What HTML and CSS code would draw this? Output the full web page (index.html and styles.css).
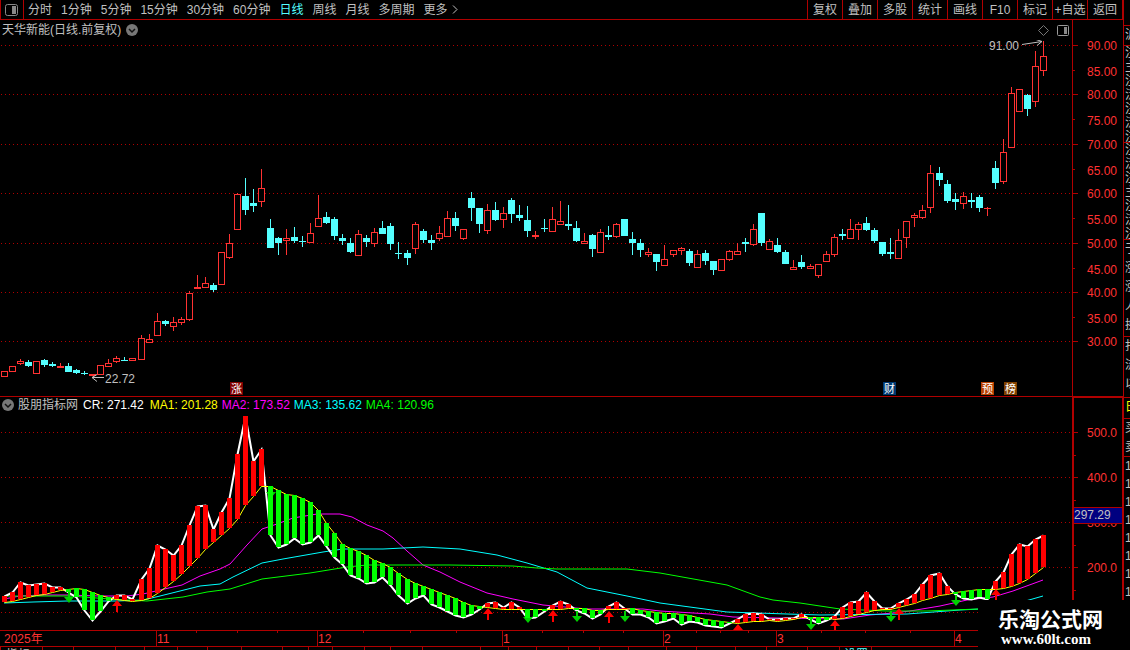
FILE: index.html
```
<!DOCTYPE html>
<html lang="zh-CN">

<head>
    <meta charset="UTF-8">
    <title>天华新能</title>
    <link rel="stylesheet" href="styles.css">
</head>

<body>
    <div class="app">
        <div class="main">
            <div class="toolbar">
                <button class="layout-btn" aria-label="布局">
                    <svg width="13" height="12" viewBox="0 0 13 12">
                        <rect x="0.5" y="0.5" width="12" height="11" rx="2" fill="none" stroke="#888" />
                        <rect x="7" y="2" width="4" height="8" fill="#888" />
                    </svg>
                </button>
                <div class="periods">
                    <button>分时</button>
                    <button>1分钟</button>
                    <button>5分钟</button>
                    <button>15分钟</button>
                    <button>30分钟</button>
                    <button>60分钟</button>
                    <button class="active">日线</button>
                    <button>周线</button>
                    <button>月线</button>
                    <button>多周期</button>
                    <button class="more">更多
                        <svg width="6" height="9" viewBox="0 0 6 9">
                            <path d="M1 0.5 L5 4.5 L1 8.5" fill="none" stroke="#c0c0c0" />
                        </svg>
                    </button>
                </div>
                <div class="tools">
                    <button>复权</button>
                    <button>叠加</button>
                    <button>多股</button>
                    <button>统计</button>
                    <button>画线</button>
                    <button>F10</button>
                    <button>标记</button>
                    <button>+自选</button>
                    <button>返回</button>
                </div>
            </div>

            <div class="panel-head">
                <div class="title">天华新能(日线.前复权)
                    <svg class="round" width="12" height="12" viewBox="0 0 12 12">
                        <circle cx="6" cy="6" r="6" fill="#777" />
                        <path d="M3 5 L6 8 L9 5" fill="none" stroke="#111" stroke-width="1.5" />
                    </svg>
                </div>
                <div class="head-icons">
                    <svg width="11" height="11" viewBox="0 0 11 11">
                        <path d="M5.5 0.5 L10.5 5.5 L5.5 10.5 L0.5 5.5 Z" fill="none" stroke="#777" />
                    </svg>
                    <svg width="12" height="11" viewBox="0 0 12 11">
                        <rect x="0.5" y="0.5" width="11" height="10" rx="1" fill="none" stroke="#999" />
                        <rect x="7" y="2" width="3" height="7" fill="#888" />
                    </svg>
                </div>
                <div class="axis-head"></div>
            </div>
            <svg id="kline" class="chart" viewBox="0 40 1123 357"></svg>

            <div class="panel-head sub">
                <div class="title">
                    <svg class="round" width="12" height="12" viewBox="0 0 12 12">
                        <circle cx="6" cy="6" r="6" fill="#777" />
                        <path d="M3 5 L6 8 L9 5" fill="none" stroke="#111" stroke-width="1.5" />
                    </svg>
                    <span class="name">股朋指标网</span>
                    <span class="cr">CR: 271.42</span>
                    <span class="ma1">MA1: 201.28</span>
                    <span class="ma2">MA2: 173.52</span>
                    <span class="ma3">MA3: 135.62</span>
                    <span class="ma4">MA4: 120.96</span>
                </div>
                <div class="axis-head"></div>
            </div>
            <svg id="cr" class="chart" viewBox="0 414 1123 233"></svg>

            <div class="bottom">
                <svg id="tabs" class="chart" viewBox="0 647 1123 3"></svg>
            </div>
        </div>

        <div class="side">
            <div class="block short"></div>
            <div class="block tiny">沪</div>
            <div class="block b1">注主注泛注泛注</div>
            <div class="block b1">注泛注主注泛注</div>
            <div class="block b2">于涨涨人换</div>
            <div class="block b3">打流以</div>
            <div class="block hl">日</div>
            <div class="block b4">买卖</div>
            <div class="block nums">1 1 1 1 1 1 1 1</div>
        </div>

        <div class="watermark">
            <b>乐淘公式网</b>
            <a href="#">www.60lt.com</a>
        </div>
    </div>
    <script src="script.js"></script>
</body>

</html>
```
FILE: styles.css
```
* {
    box-sizing: border-box;
}

body {
    margin: 0;
    background: #000;
    color: #c0c0c0;
    font: 12px/16px "Liberation Sans", "Noto Sans CJK SC", sans-serif;
}

button {
    background: none;
    border: 0;
    padding: 0;
    color: inherit;
    font: inherit;
    white-space: nowrap;
    cursor: pointer;
}

.app {
    position: relative;
    display: flex;
    height: 100vh;
    overflow: hidden;
}

.main {
    flex: 1;
    min-width: 0;
}

.toolbar {
    display: flex;
    height: 20px;
    border-bottom: 1px solid #b00000;
}

.layout-btn {
    display: flex;
    align-items: center;
    width: 24px;
    padding-left: 4px;
    border-left: 1px solid #b00000;
    border-right: 1px solid #b00000;
}

.periods {
    display: flex;
    gap: 9px;
    padding-left: 4px;
}

.periods .active {
    color: #54ffff;
}

.more {
    display: flex;
    align-items: center;
    gap: 4px;
}

.tools {
    display: grid;
    grid-template-columns: repeat(9, 35px);
    margin-left: auto;
    border-right: 1px solid #b00000;
}

.tools button {
    border-left: 1px solid #b00000;
}

.panel-head {
    display: flex;
    height: 20px;
}

.title {
    display: flex;
    align-items: center;
    flex: 1;
    gap: 5px;
    padding-left: 2px;
}

.head-icons {
    display: flex;
    align-items: center;
    gap: 8px;
    padding-right: 3px;
}

.axis-head {
    width: 51px;
    border-left: 1px solid #b00000;
}

.sub {
    height: 17px;
}

.sub .title {
    gap: 4px;
    padding-bottom: 2px;
}

.sub .axis-head {
    border-left-width: 2px;
    border-right: 1px solid #b00000;
    border-top: 1px solid #b00000;
}

.name {
    margin-right: 1px;
}

.cr {
    margin-right: 2px;
    color: #fff;
}

.ma1 {
    color: #ff0;
}

.ma2 {
    color: #f0f;
}

.ma3 {
    color: #0ff;
}

.ma4 {
    color: #0f0;
}

.chart {
    display: block;
    width: 100%;
    font-size: 12px;
}

.grid {
    stroke: #b00000;
    stroke-dasharray: 1 3;
    shape-rendering: crispEdges;
}

.frame {
    fill: #b00000;
    shape-rendering: crispEdges;
}

.label {
    fill: #ff3232;
}

.note {
    fill: #c0c0c0;
}

.arrow {
    fill: none;
    stroke: #c0c0c0;
}

.tag {
    fill: #fff;
    font-size: 11px;
}

.up {
    fill: #ff3232;
    shape-rendering: crispEdges;
}

.down {
    fill: #54ffff;
    shape-rendering: crispEdges;
}

.hollow {
    fill: #000;
    shape-rendering: crispEdges;
}

.bar-up {
    fill: #f00;
    shape-rendering: crispEdges;
}

.bar-down {
    fill: #0f0;
    shape-rendering: crispEdges;
}

.line {
    fill: none;
    stroke-width: 1;
}

.line-cr {
    stroke: #fff;
    stroke-width: 2;
}

.line-ma1 {
    stroke: #ff0;
}

.line-ma2 {
    stroke: #f0f;
}

.line-ma3 {
    stroke: #0ff;
}

.line-ma4 {
    stroke: #0f0;
}

.buy {
    fill: #f00;
}

.sell {
    fill: #00d000;
}

.side {
    width: 7px;
    overflow: hidden;
    border-left: 1px solid #b00000;
}

.block {
    width: 7px;
    overflow: hidden;
    border-bottom: 1px solid #b00000;
    padding-left: 1px;
    line-height: 19px;
    word-break: break-all;
}

.short {
    height: 26px;
}

.tiny {
    height: 20px;
}

.b1 {
    height: 97px;
    line-height: 14px;
}

.b2 {
    height: 97px;
}

.b3 {
    height: 61px;
}

.hl {
    height: 21px;
    color: #ff0;
}

.b4 {
    height: 38px;
}

.nums {
    line-height: 18px;
    border: 0;
}

.watermark {
    position: absolute;
    right: 0;
    bottom: 0;
    display: flex;
    flex-direction: column;
    width: 152px;
    height: 50px;
    padding: 6px 0 0 20px;
    background: #000;
    color: #fff;
}

.watermark b {
    font: bold 21px/25px "Noto Sans CJK SC", sans-serif;
}

.watermark a {
    padding-left: 3px;
    color: #fff;
    font: bold 15px/16px "Liberation Serif", serif;
    text-decoration: none;
}
```
FILE: script.js
```
// [high, body top, body bottom, low, up]
const candles = [
    [371, 371, 377, 377, 1], [366, 366, 372, 372, 1], [359, 361, 364, 365, 1], [360, 362, 366, 367, 0],
    [361, 361, 374, 374, 1], [359, 360, 365, 367, 0], [362, 364, 366, 367, 0], [363, 366, 368, 368, 1],
    [363, 366, 372, 372, 0], [369, 370, 373, 374, 0], [371, 373, 374, 375, 0], [374, 374, 376, 376, 1],
    [365, 365, 375, 375, 1], [359, 363, 367, 367, 1], [356, 358, 362, 363, 1], [357, 360, 361, 361, 0],
    [358, 358, 361, 361, 1], [335, 338, 360, 360, 1], [334, 339, 343, 343, 1], [313, 321, 336, 336, 1],
    [320, 321, 324, 326, 0], [317, 322, 327, 331, 1], [317, 319, 323, 325, 1], [291, 293, 320, 321, 1],
    [275, 287, 289, 289, 1], [277, 283, 288, 288, 1], [283, 285, 290, 292, 0], [252, 252, 285, 285, 1],
    [234, 243, 258, 259, 1], [193, 194, 230, 230, 1], [178, 196, 210, 215, 0], [189, 203, 206, 212, 0],
    [169, 188, 202, 207, 1], [219, 228, 248, 248, 0], [237, 238, 243, 255, 0], [229, 238, 241, 255, 1],
    [227, 237, 241, 243, 0], [236, 241, 242, 247, 0], [223, 233, 243, 243, 1], [195, 218, 227, 227, 1],
    [212, 217, 223, 224, 0], [217, 219, 236, 240, 0], [234, 238, 241, 245, 0], [238, 243, 252, 253, 0],
    [230, 234, 256, 256, 1], [235, 238, 242, 247, 0], [228, 232, 244, 247, 1], [221, 228, 234, 234, 0],
    [223, 226, 244, 250, 0], [242, 253, 254, 259, 0], [250, 253, 258, 265, 0], [222, 224, 249, 254, 1],
    [229, 231, 240, 243, 0], [235, 240, 243, 250, 0], [226, 233, 239, 241, 1], [211, 218, 237, 237, 1],
    [212, 218, 226, 231, 0], [229, 229, 239, 240, 1], [192, 198, 208, 221, 0], [208, 208, 224, 233, 0],
    [204, 210, 231, 234, 1], [202, 210, 220, 221, 0], [207, 213, 220, 228, 1], [198, 200, 214, 223, 0],
    [205, 215, 218, 221, 0], [206, 220, 231, 237, 0], [231, 235, 237, 239, 1], [219, 228, 229, 232, 0],
    [207, 219, 232, 232, 1], [201, 221, 225, 225, 1], [205, 224, 226, 230, 0], [221, 228, 241, 242, 0],
    [233, 241, 244, 244, 1], [234, 235, 249, 257, 0], [229, 232, 253, 253, 1], [226, 235, 237, 240, 0],
    [223, 224, 237, 238, 1], [219, 219, 236, 236, 0], [232, 239, 243, 255, 0], [239, 243, 250, 257, 0],
    [248, 252, 255, 257, 1], [254, 254, 262, 271, 0], [245, 259, 266, 266, 1], [250, 250, 255, 257, 1],
    [247, 248, 251, 255, 1], [249, 251, 263, 266, 0], [250, 254, 268, 268, 1], [250, 253, 261, 265, 0],
    [261, 261, 270, 275, 0], [259, 259, 271, 271, 1], [250, 251, 260, 261, 1], [243, 251, 255, 255, 1],
    [238, 242, 244, 252, 0], [224, 229, 245, 246, 1], [213, 213, 243, 246, 0], [239, 241, 250, 250, 1],
    [238, 245, 252, 253, 0], [250, 252, 264, 264, 0], [260, 267, 270, 270, 1], [255, 262, 267, 269, 0],
    [264, 266, 269, 269, 1], [264, 264, 276, 278, 1], [251, 254, 262, 262, 1], [234, 237, 255, 257, 1],
    [229, 234, 236, 240, 0], [219, 229, 239, 239, 1], [222, 224, 230, 240, 1], [217, 223, 230, 231, 0],
    [228, 230, 241, 243, 0], [242, 242, 254, 256, 0], [238, 252, 254, 259, 0], [229, 240, 259, 259, 1],
    [221, 221, 238, 248, 1], [213, 215, 218, 227, 1], [205, 210, 218, 219, 1], [165, 173, 208, 213, 1],
    [167, 173, 180, 186, 0], [180, 184, 201, 203, 0], [193, 199, 202, 210, 0], [192, 196, 204, 209, 1],
    [193, 200, 202, 208, 0], [195, 197, 208, 212, 0], [207, 208, 209, 216, 1], [161, 168, 183, 189, 0],
    [139, 152, 182, 184, 1], [87, 93, 148, 148, 1], [89, 89, 112, 112, 1], [94, 95, 109, 116, 0],
    [51, 66, 102, 107, 1], [41, 56, 71, 76, 1]
];

// [CR, MA1]
const cr = [
    [596, 602], [592, 601], [582, 599], [585, 597], [584, 595], [583, 594], [587, 592], [587, 590],
    [592, 589], [597, 588], [610, 589], [620, 592], [611, 595], [601, 597], [595, 599], [595, 600],
    [599, 601], [579, 600], [568, 598], [545, 593], [549, 587], [555, 581], [545, 574], [525, 566],
    [506, 558], [505, 549], [529, 542], [512, 535], [498, 528], [454, 519], [416, 505], [461, 496],
    [449, 486], [535, 486], [547, 490], [544, 494], [538, 495], [544, 498], [542, 502], [535, 510],
    [546, 523], [557, 533], [564, 544], [575, 548], [578, 551], [583, 555], [582, 560], [577, 563],
    [585, 567], [595, 573], [603, 579], [598, 583], [595, 586], [604, 589], [607, 592], [611, 595],
    [615, 598], [617, 602], [614, 605], [609, 606], [603, 607], [602, 608], [607, 609], [602, 609],
    [607, 609], [618, 609], [617, 609], [611, 609], [605, 609], [601, 609], [604, 608], [610, 608],
    [613, 608], [618, 610], [614, 610], [606, 609], [602, 609], [608, 609], [614, 608], [614, 610],
    [617, 611], [623, 612], [621, 613], [618, 613], [624, 614], [621, 615], [622, 617], [625, 619],
    [626, 620], [627, 621], [623, 622], [619, 623], [614, 622], [613, 621], [614, 621], [619, 620],
    [619, 621], [618, 620], [618, 619], [614, 617], [619, 617], [623, 617], [620, 617], [616, 619],
    [607, 618], [602, 616], [601, 614], [592, 612], [601, 610], [608, 609], [608, 609], [603, 607],
    [599, 605], [594, 603], [584, 600], [575, 598], [573, 595], [586, 594], [594, 592], [598, 591],
    [599, 590], [597, 589], [599, 589], [581, 589], [572, 588], [554, 586], [544, 583], [546, 579],
    [539, 573], [535, 567]
];

const ma2 = "4,599 20,596 43,595 68,595 100,596 127,596 143,594 160,590 182,585 200,576 220,569 230,564 247,545 262,529 277,524 293,518 317,514 340,514 352,517 367,525 383,531 393,538 407,551 423,565 440,572 460,582 487,593 513,599 543,605 587,609 617,609 643,609 660,611 710,614 733,617 777,618 843,619 870,615 893,613 910,611 940,606 967,600 993,597 1013,591 1043,580";
const ma3 = "4,603 33,602 67,601 117,601 143,600 160,596 200,586 220,584 233,577 262,563 283,559 323,552 343,549 383,549 423,547 460,549 497,555 527,563 557,572 587,588 627,596 660,603 727,612 787,614 820,615 907,614 960,610 1000,608 1029,600 1043,596";
const ma4 = "4,596 70,596 110,599 147,601 183,597 207,592 230,589 262,579 310,573 347,567 367,565 450,565 513,566 537,568 557,569 627,569 660,573 727,585 760,597 773,600 800,603 840,609 887,611 927,611 978,609";

// [x, top]
const buys = [[117, 600], [488, 608], [553, 610], [609, 611], [738, 624], [835, 620], [899, 608], [996, 589]];
// [x, bottom]
const sells = [[69, 603], [271, 498], [528, 623], [577, 622], [625, 622], [811, 630], [891, 622], [956, 606]];

// some columns are one pixel wider
function colX(i) {
    return 4 + i * 8 + Math.floor((i + 0.25) / 16.6);
}

function rect(x, y, w, h, cls) {
    return `<rect x="${x}" y="${y}" width="${w}" height="${h}" class="${cls}"/>`;
}

function text(x, y, str, cls) {
    return `<text x="${x}" y="${y}" class="${cls}">${str}</text>`;
}

function grid(y) {
    return `<path d="M1 ${y + 0.5}H1072" class="grid"/>`;
}

function drawKline() {
    let out = '';
    const rows = [45, 70, 94, 119, 144, 169, 193, 218, 243, 268, 292, 317, 341];
    rows.forEach((y, i) => {
        const major = i % 2 === 0;
        if (major) out += grid(y);
        out += rect(1073, y, major ? 5 : 2, 1, 'frame');
        out += text(1087, y + (major ? 5 : 6), (90 - i * 5) + '.00', 'label');
    });

    candles.forEach(([high, top, bottom, low, up], i) => {
        const x = colX(i);
        const cls = up ? 'up' : 'down';
        out += rect(x, high, 1, low - high, cls);
        out += rect(x - 3, top, 7, bottom - top, cls);
        if (up && bottom - top > 2) out += rect(x - 2, top + 1, 5, bottom - top - 2, 'hollow');
    });

    out += text(989, 50, '91.00', 'note');
    out += '<path d="M1022 44.5L1042 41.5M1036 39.5L1042 41.5L1037 45.5" class="arrow"/>';
    out += text(105, 383, '22.72', 'note');
    out += '<path d="M104 377.5H92M97 374.5L92 377.5L97 381.5" class="arrow"/>';

    const tags = [[230, '涨', '#800000'], [883, '财', '#003870'], [981, '预', '#b84000'], [1004, '榜', '#804000']];
    tags.forEach(([x, str, color]) => {
        out += `<rect x="${x}" y="382" width="13" height="13" fill="${color}"/>`;
        out += text(x + 1, 393, str, 'tag');
    });

    out += rect(1072, 40, 1, 357, 'frame');
    out += rect(0, 396, 1123, 1, 'frame');
    document.getElementById('kline').innerHTML = out;
}

function drawCr() {
    let out = '';
    [432, 477, 522, 567, 612].forEach((y, i) => {
        out += grid(y);
        out += rect(1074, y, 4, 1, 'frame');
        out += rect(1074, y + 23, 2, 1, 'frame');
        if (i < 4) out += text(1087, y + 5, (500 - i * 100) + '.0', 'label');
    });

    const points = n => cr.map((row, i) => `${colX(i) + 0.5},${row[n] + 0.5}`).join(' ');
    out += `<polyline points="${ma2}" class="line line-ma2"/>`;
    out += `<polyline points="${ma3}" class="line line-ma3"/>`;
    out += `<polyline points="${ma4}" class="line line-ma4"/>`;
    out += `<polyline points="${points(0)}" class="line line-cr"/>`;
    out += `<polyline points="${points(1)}" class="line line-ma1"/>`;

    buys.forEach(([x, y]) => {
        out += `<path d="M${x} ${y}l5 6h-4v6h-2v-6h-4z" class="buy"/>`;
    });
    sells.forEach(([x, y]) => {
        out += `<path d="M${x} ${y}l5 -6h-4v-5h-2v5h-4z" class="sell"/>`;
    });

    cr.forEach(([a, b], i) => {
        out += rect(colX(i) - 2, Math.min(a, b), 5, Math.max(Math.abs(a - b), 1), a < b ? 'bar-up' : 'bar-down');
    });

    // date axis
    out += '<rect x="0" y="630" width="1072" height="17" fill="#000"/>';
    out += rect(0, 630, 1072, 1, 'frame') + rect(0, 646, 1123, 1, 'frame');
    [196, 237, 277, 363, 410, 456, 542, 583, 623, 696, 720, 748, 821, 865, 910].forEach(x => {
        out += rect(x, 631, 1, 2, 'frame');
    });
    out += text(4, 643, '2025年', 'label');
    [[156, '11'], [317, '12'], [502, '1'], [663, '2'], [776, '3'], [954, '4']].forEach(([x, str]) => {
        out += rect(x, 631, 1, 15, 'frame') + text(x + 1, 643, str, 'label');
    });

    out += rect(1072, 414, 2, 233, 'frame') + rect(1122, 414, 1, 233, 'frame');
    // current value
    out += rect(1074, 507, 48, 17, 'frame');
    out += '<rect x="1074" y="508" width="48" height="15" fill="#000080"/>';
    out += text(1074, 519, '297.29', 'note');
    document.getElementById('cr').innerHTML = out;
}

function drawTabs() {
    const xs = [0, 42, 73, 115, 144, 177, 207, 241, 282, 308, 332, 364, 390, 422, 480, 508, 536, 568, 599, 628, 666, 696, 735, 766, 807, 839, 871];
    let out = xs.map(x => rect(x, 647, 1, 3, 'frame')).join('');
    out += text(6, 659, '指标A', 'note');
    out += '<text x="844" y="659" fill="#54ffff">设置</text>';
    document.getElementById('tabs').innerHTML = out;
}

drawKline();
drawCr();
drawTabs();
```
